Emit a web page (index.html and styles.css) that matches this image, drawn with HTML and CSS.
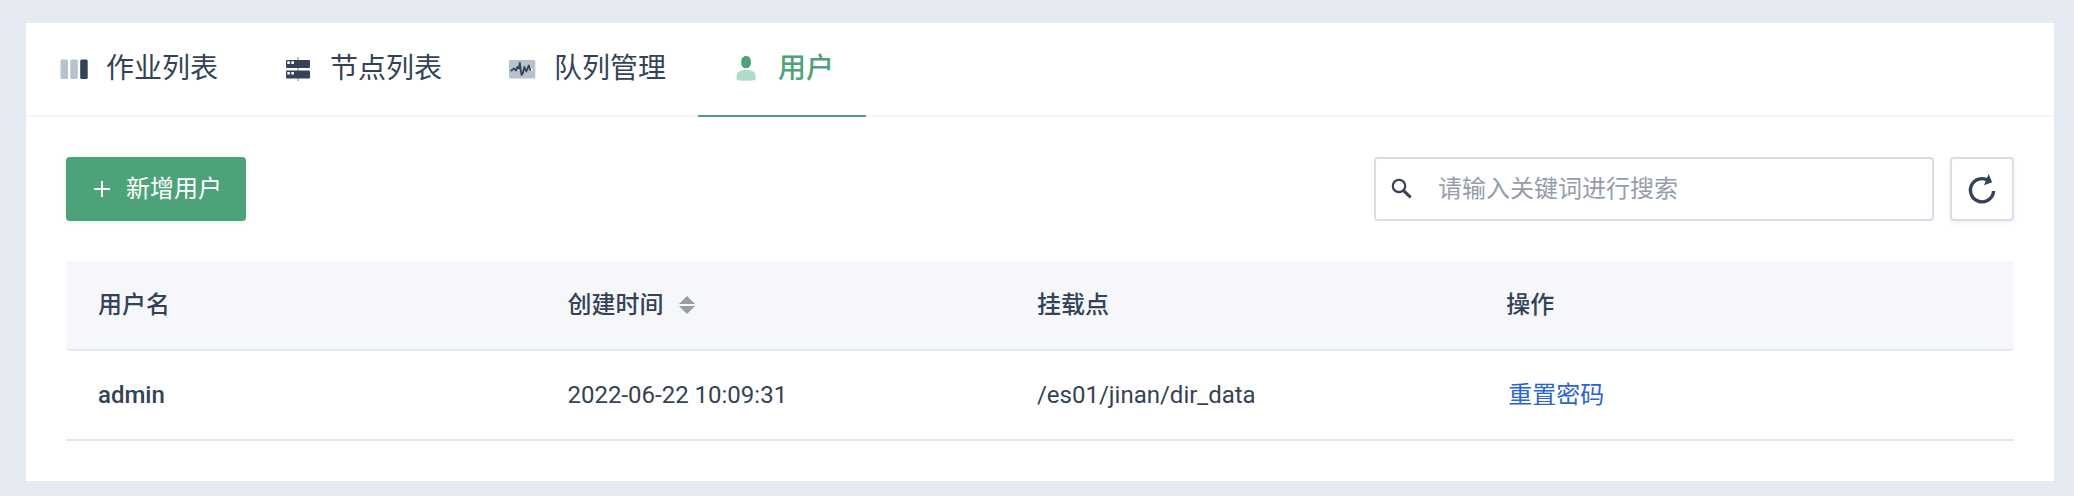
FILE: index.html
```html
<!DOCTYPE html>
<html lang="zh-CN">
<head>
<meta charset="utf-8">
<title>用户</title>
<link rel="stylesheet" href="styles.css">
</head>
<body>
<main class="card">
  <nav class="tabs">
    <a class="tab" href="#jobs">
      <svg class="tab-icon" viewBox="0 0 32 32" aria-hidden="true"><rect class="soft" x="2.500" y="6.500" width="7.500" height="19.500" rx="1.500"/><rect class="soft" x="12.300" y="6.500" width="7.500" height="19.500" rx="1.500"/><rect class="solid" x="22.200" y="6.500" width="7.500" height="19.500" rx="1.500"/></svg>
      <span>作业列表</span>
    </a>
    <a class="tab" href="#nodes">
      <svg class="tab-icon" viewBox="0 0 32 32" aria-hidden="true"><rect class="soft" x="15" y="4" width="2" height="24"/><rect class="solid" x="4" y="7" width="24" height="8" rx="1"/><rect class="solid" x="4" y="17.500" width="24" height="8" rx="1"/><path class="light" d="M5.300 8.200h2.600v2.800H5.300zM9.300 8.200h2.600v2.800H9.300zM5.300 19h2.600v2.600H5.300zM9.300 19h2.600v2.600H9.300z"/></svg>
      <span>节点列表</span>
    </a>
    <a class="tab" href="#queues">
      <svg class="tab-icon" viewBox="0 0 32 32" aria-hidden="true"><rect class="soft" x="3" y="7" width="26.300" height="18.500" rx="1.500"/><circle class="light" cx="25.300" cy="16.500" r="1.500"/><path class="pulse" d="M5.300 17.500L8 15.500l1.800 2L11.500 14l1.300 1.500L13.800 9.800l1.700 12.200 1.500-2L18.300 14l2 4.500 2.400-6 1.500 4.500"/></svg>
      <span>队列管理</span>
    </a>
    <a class="tab tab-active" href="#users" aria-current="page">
      <svg class="tab-icon" viewBox="0 0 32 32" aria-hidden="true"><rect class="solid" x="11.300" y="3" width="9.600" height="12.300" rx="4.700"/><path class="soft" d="M6.700 27V22c0-3.500 4-5 9.300-5s9.500 1.500 9.500 5v5c-3 1-16 1-18.800 0z"/></svg>
      <span>用户</span>
    </a>
  </nav>
  <section class="content">
    <div class="toolbar">
      <button class="add" type="button">
        <svg class="add-icon" viewBox="0 0 24 24" aria-hidden="true"><path d="M4 12h16M12 4v16"/></svg>
        <span>新增用户</span>
      </button>
      <div class="tools">
        <label class="search">
          <svg class="search-icon" viewBox="0 0 24 24" aria-hidden="true"><circle cx="9" cy="9" r="6.200"/><path class="handle" d="M13.600 13.600l7 6.800"/></svg>
          <input class="search-input" type="text" placeholder="请输入关键词进行搜索" aria-label="搜索">
        </label>
        <button class="refresh" type="button" aria-label="刷新">
          <svg class="refresh-icon" viewBox="0 0 32 32" aria-hidden="true"><path class="ring" d="M22.500 7.600A11.600 11.600 0 1 0 27.600 18"/><path class="tip" d="M22.700 1l3.400 8.300-8.100 3z"/></svg>
        </button>
      </div>
    </div>
    <table class="users">
      <thead>
        <tr>
          <th class="col" scope="col">用户名</th>
          <th class="col" scope="col">
            <button class="sort" type="button">创建时间
              <svg class="sort-icon" viewBox="0 0 16 18" aria-hidden="true"><path d="M8 0l8 8H0zM0 10h16l-8 8z"/></svg>
            </button>
          </th>
          <th class="col" scope="col">挂载点</th>
          <th scope="col">操作</th>
        </tr>
      </thead>
      <tbody>
        <tr>
          <td class="name">admin</td>
          <td>2022-06-22 10:09:31</td>
          <td>/es01/jinan/dir_data</td>
          <td><a class="link" href="#reset">重置密码</a></td>
        </tr>
      </tbody>
    </table>
  </section>
</main>
</body>
</html>
```
FILE: styles.css
```css
* {
  box-sizing: border-box;
}

body {
  margin: 0;
  padding: 23px 20px 15px 26px;
  background: #e5e9f2;
  color: #344356;
  font-family: Roboto, "Noto Sans CJK SC", sans-serif;
  font-size: 24px;
  line-height: 32px;
}

button,
input {
  font: inherit;
  color: inherit;
}

.card {
  background: #fff;
}

.tabs {
  display: flex;
  border-bottom: 2px solid #f3f5fa;
}

.tab {
  display: flex;
  align-items: center;
  gap: 16px;
  height: 94px;
  margin-bottom: -2px;
  padding: 0 32px;
  border-bottom: 2px solid transparent;
  color: #344356;
  font-size: 28px;
  text-decoration: none;
}

.tab-active {
  border-color: #4da379;
  color: #4da379;
  font-weight: 500;
}

.tab-icon {
  width: 32px;
  height: 32px;
}

.solid {
  fill: currentColor;
}

.soft {
  fill: #b7c2ce;
}

.tab-active .soft {
  fill: #addccb;
}

.light {
  fill: #fff;
}

.pulse {
  fill: none;
  stroke: currentColor;
  stroke-width: 1.8;
  stroke-linejoin: round;
  stroke-linecap: round;
}

.content {
  padding: 40px;
}

.toolbar {
  display: flex;
  justify-content: space-between;
  margin-bottom: 40px;
}

.add {
  display: flex;
  align-items: center;
  gap: 12px;
  height: 64px;
  padding: 0 24px;
  border: 0;
  border-radius: 4px;
  background: #4da379;
  box-shadow: 0 2px 4px rgba(77, 163, 121, 0.12);
  color: #fff;
}

.add-icon {
  width: 24px;
  height: 24px;
  fill: none;
  stroke: currentColor;
  stroke-width: 2;
}

.tools {
  display: flex;
  gap: 16px;
}

.search {
  display: flex;
  align-items: center;
  gap: 24px;
  width: 560px;
  height: 64px;
  padding: 0 14px;
  border: 2px solid #d8dee8;
  border-radius: 4px;
}

.search-icon {
  width: 24px;
  height: 24px;
  fill: none;
  stroke: currentColor;
  stroke-width: 2.2;
}

.handle {
  stroke-width: 3;
}

.search-input {
  flex: 1;
  min-width: 0;
  padding: 0;
  border: 0;
  outline: 0;
  background: none;
}

.search-input::placeholder {
  color: #949eab;
  opacity: 1;
}

.refresh {
  display: flex;
  align-items: center;
  justify-content: center;
  width: 64px;
  height: 64px;
  padding: 0;
  border: 2px solid #d8dee8;
  border-radius: 4px;
  background: #fff;
  box-shadow: 0 2px 4px rgba(52, 67, 86, 0.08);
}

.refresh-icon {
  width: 32px;
  height: 32px;
}

.ring {
  fill: none;
  stroke: currentColor;
  stroke-width: 3.4;
}

.tip {
  fill: currentColor;
}

.users {
  width: 100%;
  table-layout: fixed;
  border-collapse: separate;
  border-spacing: 0;
}

.col {
  width: 24.1%;
}

th,
td {
  padding: 28px 32px;
  border-bottom: 2px solid #e4e9f0;
  text-align: left;
  font-weight: 400;
}

th {
  background: #f5f7fb;
  font-weight: 500;
}

th:first-child {
  border-bottom-left-radius: 4px;
}

th:last-child {
  border-bottom-right-radius: 4px;
}

.sort {
  display: flex;
  align-items: center;
  gap: 16px;
  padding: 0;
  border: 0;
  background: none;
}

.sort-icon {
  width: 16px;
  height: 18px;
  fill: #949eab;
}

.name {
  font-weight: 500;
}

.link {
  padding: 0 2px;
  color: #2864d8;
  text-decoration: none;
}
```
